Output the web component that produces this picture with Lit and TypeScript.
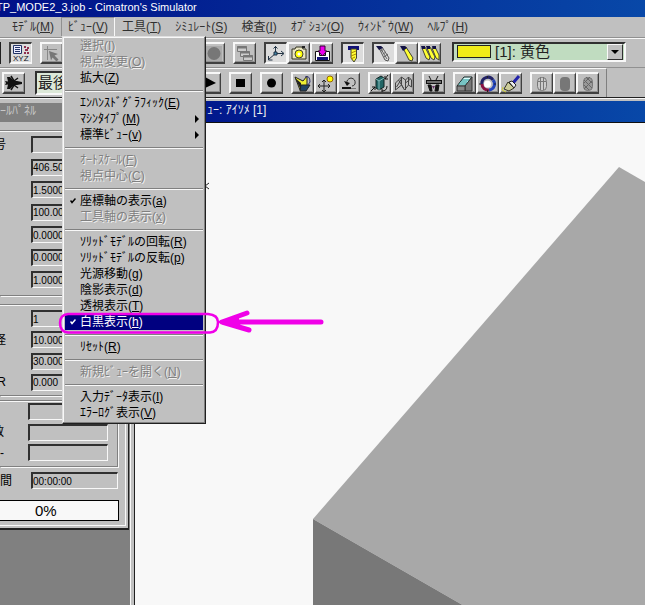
import { LitElement, html, svg, css, nothing, TemplateResult } from "lit";
import { customElement, property } from "lit/decorators.js";
import { classMap } from "lit/directives/class-map.js";

/* Toolbar pictures, each drawn on a 19x18 grid whose origin is (2,2). */
const icons: Record<string, TemplateResult> = {
  xyz: svg`<path d="M4.500 3.500h8v8h-8z" fill="#eef" stroke="#236"/><path d="M6 5.500h5M6 7.500h5M6 9.500h5" stroke="#236"/>
    <path d="M15 4h2v2h-2zM18 5h2v2h-2zM16 7h3v2h-3zM15 10h2v2h-2zM18 10h2v2h-2z" fill="#903050"/>
    <text x="4" y="19" font-family="Liberation Sans" font-size="8" fill="#112">XYZ</text>`,
  pick: svg`<path d="M7.500 4v14M4 7.500h13" stroke="#888" fill="none"/>
    <path d="M9 9l9 3-3.500 1.500 4 4-2 2-4-4-1.500 3z" fill="#777"/>`,
  disc: svg`<path d="M4 4h16v15H4z" fill="#aaa"/><circle cx="12" cy="11.500" r="6.500" fill="#777"/>`,
  windows: svg`<g fill="#ccc" stroke="#777"><path d="M4.500 4.500h9v5h-9z"/><path d="M7.500 9.500h9v5h-9z"/><path d="M10.500 13.500h9v5h-9z"/></g>
    <path d="M4 5.500h10M7 10.500h10M10 14.500h10" stroke="#777" stroke-width="2"/>`,
  axes: svg`<g fill="none" stroke="#234"><path d="M11.500 4v7.500l-7 6M11.500 11.500h8M9.500 6.500l2-2 2 2M17 9l3 2.500-3 2.500M4.500 14v4h4"/><path d="M10 10h3v3h-3z" fill="#48a"/></g>`,
  camera: svg`<path d="M5 7h3l1-2h6l1 2h3v10H5z" fill="#e8e4c0" stroke="#332"/><path d="M15 4h3v2h-3z" fill="#222"/><circle cx="12" cy="12" r="4" fill="#ff0" stroke="#443"/><circle cx="12" cy="12" r="1.500" fill="#fff"/>`,
  load: svg`<path d="M5.500 9.500h4v4h6v-4h4v9h-14z" fill="#fff" stroke="#111"/><path d="M7 15h11v3H7z" fill="#117"/><path d="M10 4h5v5h2l-4.500 5L8 9h2z" fill="#e0e" stroke="#303"/>`,
  drill: svg`<path d="M7 4h11v4H7z" fill="#117"/><path d="M10 7h5.500v9l-2.500 4-3-4z" fill="#ff3" stroke="#443"/><path d="M10 11l5-2M10 14l5-2M10 17l4-2" stroke="#a80"/>`,
  penGrey: svg`<path d="M7 6l3-1 7 11-1 3-3-1z" fill="#ddd" stroke="#555"/><path d="M9 9l3-2M11 12l3-2M12 15l4-3M9 7l6 10" stroke="#666"/><path d="M4 4h5l2 2-4 2z" fill="#114"/>`,
  penYellow: svg`<path d="M8 6l3-1 7 11-1 3-3-1z" fill="#ff3" stroke="#443"/><path d="M5 4h5l2 2-4 3z" fill="#114"/>`,
  pens: svg`<g fill="#ff3" stroke="#443"><path d="M4 6l3-1 5 10-1 3-3-2z"/><path d="M9 6l3-1 5 10-1 3-3-2z"/><path d="M14 6l3-1 4 8v5l-3-2z"/></g><path d="M3 4h4v3H4zM8 4h4v3H9zM14 4h4v3h-3z" fill="#114"/>`,
  plane: svg`<path d="M3 9l3 .5L5 5h3l4 4h3l5 1v2l-5 1h-3l-4 4H5l1-4.500-3 .5 1-2z" fill="#111"/><path d="M9 4l3 5 4-3M9 18l3-5 4 3" fill="none" stroke="#111" stroke-width="1.500"/>`,
  play: svg`<path d="M7 5l11 6-11 5z" fill="#000"/>`,
  stop: svg`<path d="M7 7h9v8H7z" fill="#000"/>`,
  record: svg`<circle cx="11.500" cy="11" r="4.500" fill="#000"/>`,
  wedge: svg`<path d="M4 5l8 4 4-5v10l-7 4z" fill="#ee3" stroke="#222"/><path d="M4 6l6 5v7z" fill="#222"/><path d="M10 13h9l-4 6h-6z" fill="#246" stroke="#222"/><path d="M14 5q5-2 5 5l-2 3" fill="none" stroke="#337"/>`,
  move: svg`<path d="M4 14h12M10 8v12M6 12l-2 2 2 2M14 12l2 2-2 2M8 10l2-2 2 2M8 18l2 2 2-2" fill="none" stroke="#222"/><circle cx="16" cy="7" r="3" fill="#ff0" stroke="#960"/>`,
  undo: svg`<path d="M10 12q-1-5 4-6q5 1 4 6q-1 2-3 2" fill="none" stroke="#333"/><path d="M7 9l3 5 3-3z" fill="#111"/><path d="M5 15h9v2H5z" fill="#111"/><path d="M14 16.500h5" stroke="#777"/>`,
  cube: svg`<path d="M8 7l5-3 3 2v9l-5 3-3-2z" fill="#266" stroke="#122"/><path d="M11 9v9M8 7l3 2 5-3" stroke="#8bb" fill="none"/><path d="M3 19l4-4M4 15h3v3M20 3l-3 4M17 4v3h3M14 19q5 0 5-5M14 17v3" fill="none" stroke="#111"/>`,
  fold: svg`<path d="M4.500 11l6-6 4 3 3-3 3 3v7l-3-2-4 5-3-5-6 5zM10.500 5v8M14.500 8v10M17.500 5v8M7.500 8l5 8M10.500 7l-5 8M14.500 11l5-4" fill="none" stroke="#444"/>`,
  clamp: svg`<path d="M4 8h16v4H4z" fill="#111"/><path d="M7 4l2 4M16 4l-2 4M6 13l2 6h2l-1-6zM14 13l-1 6h3l1-6z" fill="#111" stroke="#111"/><path d="M5 10h14" stroke="#ccc"/><path d="M10 14l1.500 3 1.500-3z" fill="#636"/>`,
  block: svg`<path d="M4 14l7-9h8l-7 9z" fill="#dff" stroke="#122"/><path d="M12 14l7-9v14h-7z" fill="#777" stroke="#333"/><path d="M4 14h8v5H4z" fill="#888" stroke="#333"/><path d="M6 12h7M7.500 10h7M9 8h7" stroke="#188"/>`,
  ring: svg`<g fill="none" stroke-width="3"><path d="M6 12a6 6 0 0 1 11-4" stroke="#226"/><path d="M17 8a6 6 0 0 1-4 10" stroke="#24b"/><path d="M13 18a6 6 0 0 1-7-6" stroke="#814"/></g><circle cx="11.500" cy="12" r="3.500" fill="#fff"/><path d="M11.500 4v2M11.500 18v2M3 12h2M18 12h2" stroke="#222"/>`,
  brush: svg`<path d="M20 4l-6 7" stroke="#22a" stroke-width="3"/><path d="M10 10l3-1 4 4-2 3z" fill="#eee" stroke="#222"/><path d="M9 10l6 6-5 3-5-2z" fill="#cc9" stroke="#332"/><path d="M3 18l4 2M4 15l-1 3" stroke="#cc3"/>`,
  wire: svg`<rect x="7.500" y="5.500" width="9" height="13" rx="4" fill="#ccc" stroke="#777"/><path d="M10.500 5v13M13.500 5v13M8 9.500h8" stroke="#777"/>`,
  solid: svg`<rect x="7" y="5" width="10" height="14" rx="4" fill="#777"/>`,
  mesh: svg`<rect x="7.500" y="5.500" width="9" height="13" rx="4" fill="#999" stroke="#777"/><path d="M10 5l6 6M8 8l8 8M8 13l5 5M14 5l-6 6M16 9l-8 8" stroke="#666"/>`,
};

/* A caption such as 拡大(Z): the letter in the brackets is underlined. */
const caption = (text: string) => {
  const m = /^(.*\()(\w)(\))$/.exec(text);
  return m ? html`${m[1]}<u>${m[2]}</u>${m[3]}` : html`${text}`;
};

@customElement("tool-button")
class ToolButton extends LitElement {
  @property() icon = "";
  @property({ type: Boolean }) down = false;
  static styles = css`
    :host { display: block; flex: none; }
    button {
      box-sizing: border-box; width: 23px; height: 22px; display: block; padding: 0;
      background: #c0c0c0; border: 2px solid; border-color: #f8f8f8 #404040 #404040 #f8f8f8;
      border-right-width: 1px; box-shadow: inset -1px -1px #909090;
    }
    button.down { background: #dcdcdc; border-color: #404040 #f8f8f8 #f8f8f8 #404040; box-shadow: none; }
    svg { display: block; width: 19px; height: 18px; overflow: visible; }
  `;
  render() {
    return html`<button class=${classMap({ down: this.down })} aria-label=${this.icon} aria-pressed=${this.down}>
      <svg viewBox="2 2 19 18">${icons[this.icon] ?? nothing}</svg>
    </button>`;
  }
}

type Entry = { text: string; off?: boolean; checked?: boolean; sub?: boolean; active?: boolean };
const viewMenu: Entry[][] = [
  [{ text: "選択(I)", off: true }, { text: "視点変更(O)", off: true }, { text: "拡大(Z)" }],
  [{ text: "ｴﾝﾊﾝｽﾄﾞｸﾞﾗﾌｨｯｸ(E)" }, { text: "ﾏｼﾝﾀｲﾌﾟ(M)", sub: true }, { text: "標準ﾋﾞｭｰ(v)", sub: true }],
  [{ text: "ｵｰﾄｽｹｰﾙ(F)", off: true }, { text: "視点中心(C)", off: true }],
  [{ text: "座標軸の表示(a)", checked: true }, { text: "工具軸の表示(x)", off: true }],
  [
    { text: "ｿﾘｯﾄﾞﾓﾃﾞﾙの回転(R)" }, { text: "ｿﾘｯﾄﾞﾓﾃﾞﾙの反転(p)" }, { text: "光源移動(g)" },
    { text: "陰影表示(d)" }, { text: "透視表示(T)" }, { text: "白黒表示(h)", checked: true, active: true },
  ],
  [{ text: "ﾘｾｯﾄ(R)" }],
  [{ text: "新規ﾋﾞｭｰを開く(N)", off: true }],
  [{ text: "入力ﾃﾞｰﾀ表示(I)" }, { text: "ｴﾗｰﾛｸﾞ表示(V)" }],
];

@customElement("view-menu")
class ViewMenu extends LitElement {
  static styles = css`
    :host {
      display: block; box-sizing: border-box; width: 144px; padding: 1px 2px 2px; background: #c0c0c0;
      border: 1px solid; border-color: #e0e0e0 #202020 #202020 #e0e0e0;
      box-shadow: inset -1px -1px #808080, inset 1px 1px #f8f8f8;
    }
    .part + .part { border-top: 1px solid #808080; margin-top: 4px; padding-top: 4px; box-shadow: inset 0 1px #f8f8f8; }
    .row { position: relative; }
    button {
      display: flex; align-items: center; width: 100%; height: 16px; padding: 0 4px 0 0; border: 0;
      background: none; color: #000; font: inherit; line-height: 16px; white-space: nowrap; text-align: left;
    }
    button:disabled { color: #808080; text-shadow: 1px 1px #f0f0f0; }
    .active { background: #000080; color: #fff; }
    .tick { width: 15px; flex: none; display: flex; justify-content: center; box-sizing: border-box; }
    .label { flex: 1; }
    svg { display: block; flex: none; }
    .mark { position: absolute; left: -9px; top: -6px; pointer-events: none; }
  `;
  render() {
    return viewMenu.map((part) => html`<div class="part" role="group">${part.map((e) => html`
      <div class="row">
        <button role="menuitem" ?disabled=${e.off} class=${classMap({ active: !!e.active })}>
          <span class="tick">${e.checked ? html`<svg width="6" height="6"><path d="M.5 2.500l1.500 2 3.500-4" fill="none" stroke="currentColor" stroke-width="1.500"/></svg>` : nothing}</span>
          <span class="label">${caption(e.text)}</span>
          ${e.sub ? html`<svg width="4" height="8"><path d="M0 0l4 4-4 4z"/></svg>` : nothing}
        </button>
        ${e.active ? html`<svg class="mark" width="270" height="32" fill="none" stroke="#f000e8" stroke-linecap="round">
          <path stroke-width="2.500" d="M12 6H152Q162 7 162 14Q162 24 154 24.500H12Q4 24 4 15Q4 7 12 6Z"/>
          <path stroke-width="5" d="M166 14H265M166 14L191 5M166 14L193 22"/>
          <path stroke-width="2" fill="#f000e8" d="M163 14L182 9V18Z"/>
        </svg>` : nothing}
      </div>`)}</div>`);
  }
}

@customElement("control-panel")
class ControlPanel extends LitElement {
  static styles = css`
    :host {
      display: block; box-sizing: border-box; width: 129px; padding: 2px 8px 7px 0; background: #c0c0c0;
      border-right: 1px solid #202020; border-bottom: 2px solid #202020; box-shadow: inset -2px -2px #c0c0c0, inset -3px -3px #f8f8f8;
    }
    h2 { margin: 0 -5px 8px 0; height: 19px; background: #808080; color: #c8c8c8; font: inherit; line-height: 16px; }
    fieldset {
      margin: 0 2px 0 0; padding: 0; min-width: 0; border: 1px solid #808080; border-left: 0; display: flex; flex-direction: column;
      justify-content: space-between; box-sizing: border-box; box-shadow: inset 0 1px #f8f8f8, 1px 1px #f8f8f8;
    }
    .first { height: 166px; padding: 5px 8px 7px 0; }
    .second { height: 92px; margin-top: 8px; padding: 5px 8px 4px 0; }
    .third { height: 67px; margin-top: 4px; padding: 2px 9px 5px 0; }
    .row { display: flex; align-items: center; height: 17px; }
    label { display: flex; justify-content: flex-end; width: 6px; margin-right: 25px; overflow: hidden; white-space: nowrap; flex: none; }
    .cut label { width: 4px; margin-right: 24px; }
    .total { margin: 5px 2px 0 0; }
    .total label { width: 12px; margin-right: 19px; }
    input {
      box-sizing: border-box; flex: 1; min-width: 0; width: 0; height: 17px; padding: 0; background: none; border-radius: 0; outline: 0;
      border: 1px solid; border-width: 2px 1px 1px 2px; border-color: #303030 #f8f8f8 #f8f8f8 #303030;
      font-family: inherit; font-size: 10px; color: #000;
    }
    .progress {
      box-sizing: border-box; height: 21px; margin: 11px 1px 0 0; border: 1px solid #000; border-left: 0;
      background: #f8f8f8; font-size: 15px; line-height: 19px; padding-left: 35px;
    }
  `;
  private row(id: string, label: string, value: string, extra = "") {
    return html`<div class="row ${extra}"><label for=${id}>${label}</label><input id=${id} .value=${value} readonly /></div>`;
  }
  render() {
    return html`
      <h2>ｰﾙﾊﾟﾈﾙ</h2>
      <fieldset class="first">
        ${["", "406.500", "1.5000", "100.000", "0.0000", "0.0000", "1.0000"].map((v, i) => this.row(`a${i}`, i ? "" : "号", v))}
      </fieldset>
      <fieldset class="second">
        ${[["", "1"], ["径", "10.0000"], ["", "30.0000"], ["R", "0.000"]].map(([l, v], i) => this.row(`b${i}`, l, v))}
      </fieldset>
      <fieldset class="third">
        ${["", "数", "-"].map((l, i) => this.row(`c${i}`, l, "", "cut"))}
      </fieldset>
      ${this.row("time", "間", "00:00:00", "total")}
      <div class="progress">0%</div>`;
  }
}

const topMenus = ["ﾓﾃﾞﾙ(M)", "ﾋﾞｭｰ(V)", "工具(T)", "ｼﾐｭﾚｰﾄ(S)", "検査(I)", "ｵﾌﾟｼｮﾝ(O)", "ｳｨﾝﾄﾞｳ(W)", "ﾍﾙﾌﾟ(H)"];
const upper = [["disc"], ["windows"], ["axes!", "camera", "load"], ["drill!"], ["penGrey!", "penYellow", "pens"]];
const lower = [["play"], ["stop"], ["record"], ["wedge", "move", "undo"], ["cube", "fold"], ["clamp"], ["block", "ring", "brush"], ["wire", "solid", "mesh"]];

@customElement("app-root")
class AppRoot extends LitElement {
  static styles = css`
    :host {
      display: flex; flex-direction: column; min-height: 100vh; overflow: hidden; background: #c0c0c0; color: #000;
      font: 12px/16px "Liberation Sans", "Noto Sans CJK JP", sans-serif;
    }
    .title { height: 17px; line-height: 15px; margin: 0; font-size: 11px; font-weight: 400; color: #fff; white-space: pre;
      text-indent: -4px; background: linear-gradient(90deg, #001088, #0848a8); overflow: hidden; }
    nav { display: flex; height: 20px; padding-left: 5px; border-bottom: 1px solid #909090; }
    .item { position: relative; }
    .item > button { height: 20px; padding: 0 6px; border: 1px solid transparent; background: none; font: inherit; color: #303030; white-space: nowrap; }
    .item > button.open { border-color: #909090 #f8f8f8 #f8f8f8 #909090; }
    view-menu { position: absolute; left: 1px; top: 19px; z-index: 2; }
    .bar { display: flex; height: 30px; box-sizing: border-box; gap: 8px; align-items: center; border-top: 1px solid #f8f8f8; border-bottom: 1px solid #909090; white-space: nowrap; }
    .bar.low { width: 607px; max-width: 100%; box-sizing: border-box; border-right: 1px solid #808080; border-bottom: 0; padding-left: 2px; height: 29px; }
    .shelf { border-bottom: 1px solid #202020; }
    .group { display: flex; flex: none; }
    .edge { width: 1px; height: 22px; background: #202020; flex: none; }
    .hidden { width: 123px; flex: none; }
    .combo { display: flex; align-items: center; box-sizing: border-box; height: 20px; width: 174px; margin: 0 0 3px 3px; padding: 0 1px 0 3px; gap: 4px;
      background: #c0dcc0; border: 2px solid; border-color: #303030 #f8f8f8 #f8f8f8 #303030; }
    .swatch { box-sizing: border-box; width: 34px; height: 13px; border: 1px solid #222; background: #f0ec18; flex: none; }
    select { appearance: none; border: 0; border-radius: 0; padding: 0; margin: 0; background: none; color: #222; font: inherit; font-size: 15px; line-height: 16px; height: 16px; flex: 1; min-width: 0; }
    .drop { box-sizing: border-box; width: 16px; height: 16px; flex: none; background: #c0c0c0; border: 1px solid; border-color: #f8f8f8 #303030 #303030 #f8f8f8;
      display: grid; place-items: center; pointer-events: none; }
    .last { box-sizing: border-box; flex: none; width: 155px; height: 24px; margin-left: 2px; padding: 0 1px; background: #dce8d8; border: 2px solid; border-color: #303030 #f8f8f8 #f8f8f8 #303030; }
    .work { flex: 1; display: flex; border-top: 1px solid #f8f8f8; padding-top: 2px; }
    .side { width: 130px; background: #808080; flex: none; border-right: 1px solid #f8f8f8; }
    .view { flex: 1; display: flex; flex-direction: column; min-width: 0; margin-left: 3px; border-left: 1px solid #202020; }
    .view h2 { margin: 0; height: 21px; font: inherit; line-height: 18px; padding-left: 72px; color: #f0f0f0; white-space: pre;
      background: linear-gradient(90deg, #001088, #0848a8); border-bottom: 1px solid #101010; }
    .scene { flex: 1; display: block; width: 100%; min-height: 0; background: #f8f8f8; }
  `;
  private groups(list: string[][]) {
    return list.map((g) => html`<div class="group">${g.map((n) => html`<tool-button icon=${n.replace("!", "")} ?down=${n.endsWith("!")}></tool-button>`)}</div>`);
  }
  render() {
    return html`
      <h1 class="title">TP_MODE2_3.job - Cimatron's Simulator</h1>
      <nav>${topMenus.map((t, i) => html`<div class="item">
        <button class=${classMap({ open: i === 1 })}>${caption(t)}</button>${i === 1 ? html`<view-menu role="menu"></view-menu>` : nothing}
      </div>`)}</nav>
      <div class="bar">
        <span class="edge"></span>
        ${this.groups([["xyz!"], ["pick"]])}
        <span class="hidden"></span>
        ${this.groups(upper)}
        <div class="combo"><span class="swatch"></span><select aria-label="色"><option>[1]: 黄色</option></select>
          <span class="drop"><svg width="8" height="4"><path d="M0 0h8l-4 4z"/></svg></span></div>
      </div>
      <div class="shelf"><div class="bar low">
        ${this.groups([["plane"]])}
        <select class="last" aria-label="位置"><option>最後</option></select>
        ${this.groups(lower)}
      </div></div>
      <div class="work">
        <div class="side"><control-panel></control-panel></div>
        <div class="view">
          <h2>ｭｰ: ｱｲｿﾒ [1]</h2>
          <svg class="scene">
            <path d="M484 44L178 396L1178 971V444Z" fill="#a8a8a8"/>
            <path d="M178 396L1178 971V2000H178Z" fill="#787878"/>
            <path d="M74 60l-4 3 4 3" fill="none" stroke="#222"/>
          </svg>
        </div>
      </div>`;
  }
}
